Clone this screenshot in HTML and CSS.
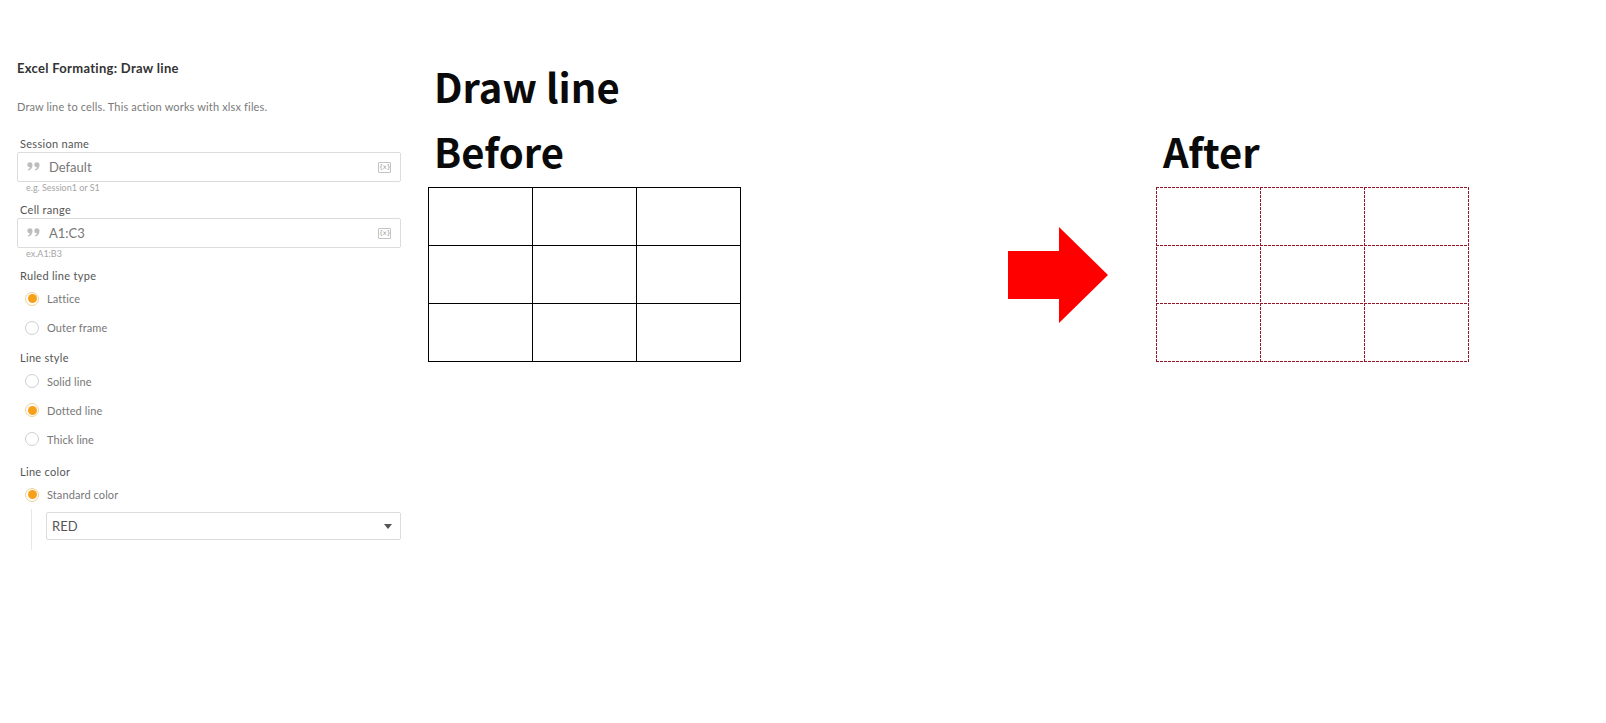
FILE: index.html
```html
<!DOCTYPE html>
<html lang="en">
<head>
<meta charset="utf-8">
<title>Excel Formating: Draw line</title>
<link rel="stylesheet" href="styles.css">
</head>
<body>
<div class="page">
  <aside class="panel">
    <h1 class="panel-title">Excel Formating: Draw line</h1>
    <p class="panel-desc">Draw line to cells. This action works with xlsx files.</p>

    <div class="field">
      <div class="field-label">Session name</div>
      <div class="input">
        <svg class="quote" viewBox="0 0 13 9" width="13" height="9"><path d="M0.3 2.9a2.6 2.6 0 1 1 5.2 0c0 3-1.8 5-4.4 5.7l-0.4-1c1.3-0.6 2.1-1.4 2.3-2.4a2.6 2.6 0 0 1-2.7-2.3z"/><path d="M7.3 2.9a2.6 2.6 0 1 1 5.2 0c0 3-1.8 5-4.4 5.7l-0.4-1c1.3-0.6 2.1-1.4 2.3-2.4a2.6 2.6 0 0 1-2.7-2.3z"/></svg>
        <span class="input-value">Default</span>
        <span class="var-icon">{x}</span>
      </div>
      <div class="hint">e.g. Session1 or S1</div>
    </div>

    <div class="field field-gap">
      <div class="field-label">Cell range</div>
      <div class="input">
        <svg class="quote" viewBox="0 0 13 9" width="13" height="9"><path d="M0.3 2.9a2.6 2.6 0 1 1 5.2 0c0 3-1.8 5-4.4 5.7l-0.4-1c1.3-0.6 2.1-1.4 2.3-2.4a2.6 2.6 0 0 1-2.7-2.3z"/><path d="M7.3 2.9a2.6 2.6 0 1 1 5.2 0c0 3-1.8 5-4.4 5.7l-0.4-1c1.3-0.6 2.1-1.4 2.3-2.4a2.6 2.6 0 0 1-2.7-2.3z"/></svg>
        <span class="input-value">A1:C3</span>
        <span class="var-icon">{x}</span>
      </div>
      <div class="hint">ex.A1:B3</div>
    </div>

    <div class="group group-first">
      <div class="field-label">Ruled line type</div>
      <div class="radio-row"><span class="radio checked"></span><span class="radio-label">Lattice</span></div>
      <div class="radio-row"><span class="radio"></span><span class="radio-label">Outer frame</span></div>
    </div>

    <div class="group">
      <div class="field-label group-label">Line style</div>
      <div class="radio-row"><span class="radio"></span><span class="radio-label">Solid line</span></div>
      <div class="radio-row"><span class="radio checked"></span><span class="radio-label">Dotted line</span></div>
      <div class="radio-row"><span class="radio"></span><span class="radio-label">Thick line</span></div>
    </div>

    <div class="group group-color">
      <div class="field-label">Line color</div>
      <div class="radio-row"><span class="radio checked"></span><span class="radio-label">Standard color</span></div>
      <div class="color-options">
        <div class="select">
          <span class="select-value">RED</span>
          <span class="select-arrow"></span>
        </div>
      </div>
    </div>
  </aside>

  <main class="demo">
    <h2 class="demo-title">Draw line</h2>
    <div class="compare">
      <section class="col">
        <h2 class="col-title">Before</h2>
        <div class="grid-before">
          <div class="cell"></div><div class="cell"></div><div class="cell"></div>
          <div class="cell"></div><div class="cell"></div><div class="cell"></div>
          <div class="cell"></div><div class="cell"></div><div class="cell"></div>
        </div>
      </section>
      <div class="arrow-wrap">
        <svg class="arrow" viewBox="0 0 100 96" width="100" height="96"><polygon points="0,24 51,24 51,0 100,48 51,96 51,72 0,72" fill="#ff0000"/></svg>
      </div>
      <section class="col col-after">
        <h2 class="col-title">After</h2>
        <svg class="grid-after" viewBox="0 0 313 175" width="313" height="175">
          <g stroke="#931628" stroke-width="1" stroke-dasharray="3 1" fill="none">
            <line x1="0" y1="0.5" x2="313" y2="0.5"/>
            <line x1="0" y1="58.5" x2="313" y2="58.5"/>
            <line x1="0" y1="116.5" x2="313" y2="116.5"/>
            <line x1="0" y1="174.5" x2="313" y2="174.5"/>
            <line x1="0.5" y1="0" x2="0.5" y2="175"/>
            <line x1="104.5" y1="0" x2="104.5" y2="175"/>
            <line x1="208.5" y1="0" x2="208.5" y2="175"/>
            <line x1="312.5" y1="0" x2="312.5" y2="175"/>
          </g>
        </svg>
      </section>
    </div>
  </main>
</div>
</body>
</html>
```
FILE: styles.css
```css
* { box-sizing: border-box; }
html, body { margin: 0; padding: 0; background: #fff; }
body { font-family: Lato, "Open Sans", sans-serif; }

.page {
  display: flex;
  align-items: flex-start;
  width: 1606px;
  height: 723px;
  overflow: hidden;
}

/* ---------- left panel ---------- */
.panel {
  width: 401px;
  padding-left: 17px;
  padding-top: 60px;
  flex: none;
}
.panel-title {
  margin: 0;
  font-size: 13px;
  line-height: 16px;
  font-weight: 700;
  letter-spacing: 0.3px;
  color: #333;
}
.panel-desc {
  margin: 24px 0 0;
  font-size: 11px;
  line-height: 14px;
  letter-spacing: 0.15px;
  color: #7a7a7a;
}
.field { margin-top: 22px; }
.field-gap { margin-top: 8px; }
.field-label {
  padding-left: 3px;
  font-size: 11px;
  line-height: 16px;
  letter-spacing: 0.3px;
  color: #555;
}
.input {
  display: flex;
  align-items: center;
  height: 30px;
  border: 1px solid #dcdcdc;
  border-radius: 2px;
  padding-left: 9px;
  padding-right: 9px;
}
.quote { fill: #bdbdbd; flex: none; margin-top: -1px; }
.input-value {
  margin-left: 9px;
  flex: 1;
  font-size: 13px;
  color: #777;
}
.var-icon {
  width: 13px;
  height: 11px;
  border: 1px solid #c4c4c4;
  border-radius: 1px;
  font-size: 6.5px;
  line-height: 9px;
  text-align: center;
  color: #999;
  font-family: "DejaVu Sans", sans-serif;
  letter-spacing: -0.3px;
}
.hint {
  padding-left: 9px;
  font-size: 9px;
  line-height: 12px;
  color: #a5a5a5;
}
.group { margin-top: 8px; }
.group-first { margin-top: 8px; }
.group-label { margin-bottom: 0.5px; }
.group-color { margin-top: 10.5px; }
.radio-row {
  display: flex;
  align-items: center;
  height: 29px;
  padding-left: 8px;
}
.radio {
  width: 14px;
  height: 14px;
  border-radius: 50%;
  border: 1px solid #cfcfcf;
  background: #fff;
  flex: none;
  display: flex;
  align-items: center;
  justify-content: center;
}
.radio.checked { border-color: #efd29a; }
.radio.checked::after {
  content: "";
  width: 9px;
  height: 9px;
  border-radius: 50%;
  background: #f7a11a;
}
.radio-label {
  margin-left: 8px;
  font-size: 11px;
  letter-spacing: 0.1px;
  color: #777;
}
.color-options {
  margin-left: 14px;
  border-left: 1px solid #e8e8e8;
  padding: 3px 0 10px 14px;
}
.select {
  display: flex;
  align-items: center;
  height: 28px;
  border: 1px solid #dcdcdc;
  border-radius: 2px;
  padding: 0 8px 0 5px;
}
.select-value {
  flex: 1;
  font-size: 13px;
  color: #555;
}
.select-arrow {
  width: 0;
  height: 0;
  border-left: 4.5px solid transparent;
  border-right: 4.5px solid transparent;
  border-top: 5px solid #555;
}

/* ---------- demo area ---------- */
.demo {
  margin-left: 27px;
  padding-top: 66px;
  flex: none;
}
.demo-title, .col-title {
  margin: 0;
  padding-left: 6px;
  font-family: "Noto Sans CJK JP", "Noto Sans", sans-serif;
  font-weight: 700;
  font-size: 40px;
  line-height: 40px;
  color: #0a0a0a;
}
.compare {
  display: flex;
  align-items: flex-end;
  margin-top: 25px;
}
.col { width: 313px; flex: none; }
.col-title { margin-bottom: 16px; }
.grid-before {
  display: grid;
  grid-template-columns: 104px 104px 104px;
  grid-template-rows: 58px 58px 58px;
  width: 313px;
  border-left: 1px solid #000;
  border-top: 1px solid #000;
}
.cell {
  border-right: 1px solid #000;
  border-bottom: 1px solid #000;
}
.grid-after { display: block; }
.arrow-wrap {
  height: 175px;
  display: flex;
  align-items: center;
  margin-left: 267px;
  margin-right: 48px;
}
.arrow { display: block; }
.col-after .col-title { padding-left: 7px; }
```
